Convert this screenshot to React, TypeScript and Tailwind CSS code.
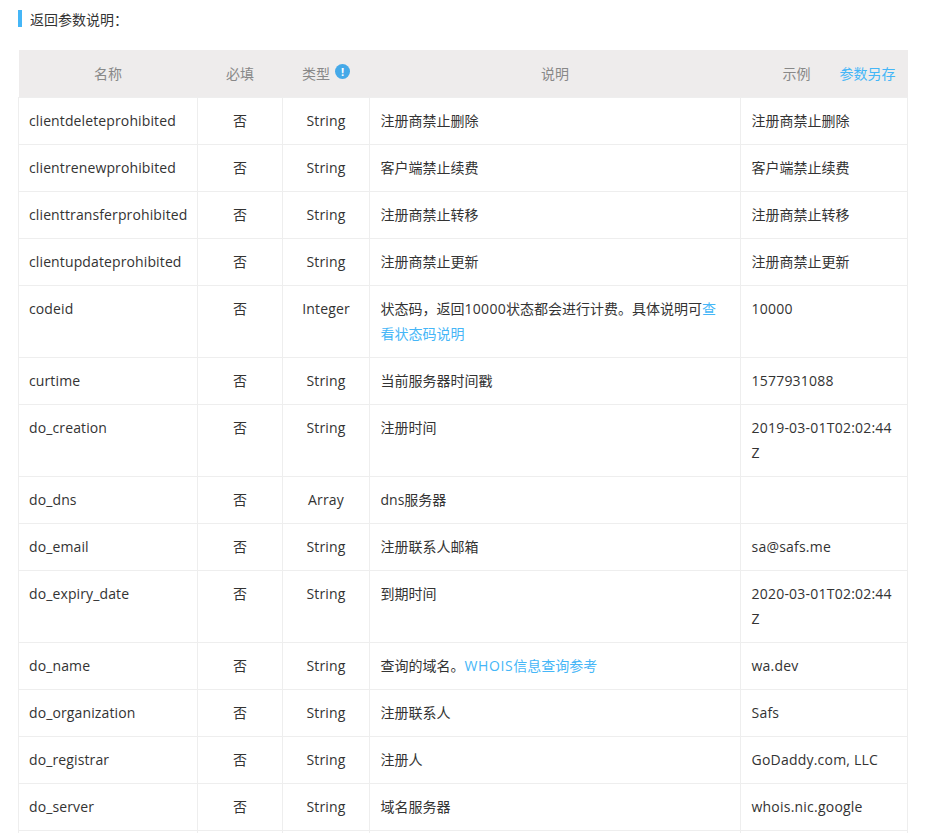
const rows: { name: string; type: string; desc: React.ReactNode; example: string }[] = [
  { name: "clientdeleteprohibited", type: "String", desc: "注册商禁止删除", example: "注册商禁止删除" },
  { name: "clientrenewprohibited", type: "String", desc: "客户端禁止续费", example: "客户端禁止续费" },
  { name: "clienttransferprohibited", type: "String", desc: "注册商禁止转移", example: "注册商禁止转移" },
  { name: "clientupdateprohibited", type: "String", desc: "注册商禁止更新", example: "注册商禁止更新" },
  {
    name: "codeid",
    type: "Integer",
    desc: (
      <>
        状态码，返回<span className="tracking-[0.3px]">10000</span>状态都会进行计费。具体说明可<a href="#" className="text-[#45b6f7]">查看状态码说明</a>
      </>
    ),
    example: "10000",
  },
  { name: "curtime", type: "String", desc: "当前服务器时间戳", example: "1577931088" },
  { name: "do_creation", type: "String", desc: "注册时间", example: "2019-03-01T02:02:44Z" },
  { name: "do_dns", type: "Array", desc: "dns服务器", example: "" },
  { name: "do_email", type: "String", desc: "注册联系人邮箱", example: "sa@safs.me" },
  { name: "do_expiry_date", type: "String", desc: "到期时间", example: "2020-03-01T02:02:44Z" },
  {
    name: "do_name",
    type: "String",
    desc: (
      <>
        查询的域名。<a href="#" className="text-[#45b6f7]"><span className="tracking-[0.6px]">WHOIS</span>信息查询参考</a>
      </>
    ),
    example: "wa.dev",
  },
  { name: "do_organization", type: "String", desc: "注册联系人", example: "Safs" },
  { name: "do_registrar", type: "String", desc: "注册人", example: "GoDaddy.com, LLC" },
  { name: "do_server", type: "String", desc: "域名服务器", example: "whois.nic.google" },
  { name: "", type: "", desc: "", example: "" },
];

const cell = "border border-[#eeeeee] pt-[10px] pb-[11px] align-top";

const App = () => {
  return (
    <div className="h-[833px] overflow-hidden bg-white pl-[18px] text-[14px] leading-[25px] text-[#333333] font-['Open_Sans','Noto_Sans_CJK_SC',sans-serif]">
      <div className="flex h-[50px] items-start gap-[8px] pt-[10px]">
        <div className="h-[17px] w-[4px] bg-[#45b6f7]" />
        <h3 className="text-[14px] font-normal leading-[20px]">返回参数说明：</h3>
      </div>
      <table className="w-[889px] table-fixed border-collapse">
        <colgroup>
          <col className="w-[179px]" />
          <col className="w-[85px]" />
          <col className="w-[87px]" />
          <col className="w-[371px]" />
          <col className="w-[167px]" />
        </colgroup>
        <thead>
          <tr className="h-[47px] bg-[#eeecec] text-[#888888]">
            <th className="font-normal">名称</th>
            <th className="font-normal">必填</th>
            <th className="font-normal">
              <span className="inline-flex items-start justify-center gap-[5px]">
                类型
                <span className="mt-[3px] flex h-[15px] w-[15px] items-center justify-center rounded-full bg-[#45a9e8] text-[11px] font-bold leading-none text-white">!</span>
              </span>
            </th>
            <th className="font-normal">说明</th>
            <th className="font-normal">
              <div className="flex justify-end gap-[29px] pr-[12px]">
                <span>示例</span>
                <a href="#" className="text-[#45b6f7]">参数另存</a>
              </div>
            </th>
          </tr>
        </thead>
        <tbody>
          {rows.map((r, i) => (
            <tr key={i}>
              <td className={`${cell} pl-[10px] pr-[10px] tracking-[0.12px]`}>{r.name || "\u00a0"}</td>
              <td className={`${cell} px-[10px] text-center`}>{r.name ? "否" : ""}</td>
              <td className={`${cell} px-[10px] text-center tracking-[0.15px]`}>{r.type}</td>
              <td className={`${cell} px-[10.5px]`}>{r.desc}</td>
              <td className={`${cell} px-[10.5px] break-all ${i < 4 ? "" : "tracking-[0.22px]"}`}>{r.example}</td>
            </tr>
          ))}
        </tbody>
      </table>
    </div>
  );
};

export default App;
